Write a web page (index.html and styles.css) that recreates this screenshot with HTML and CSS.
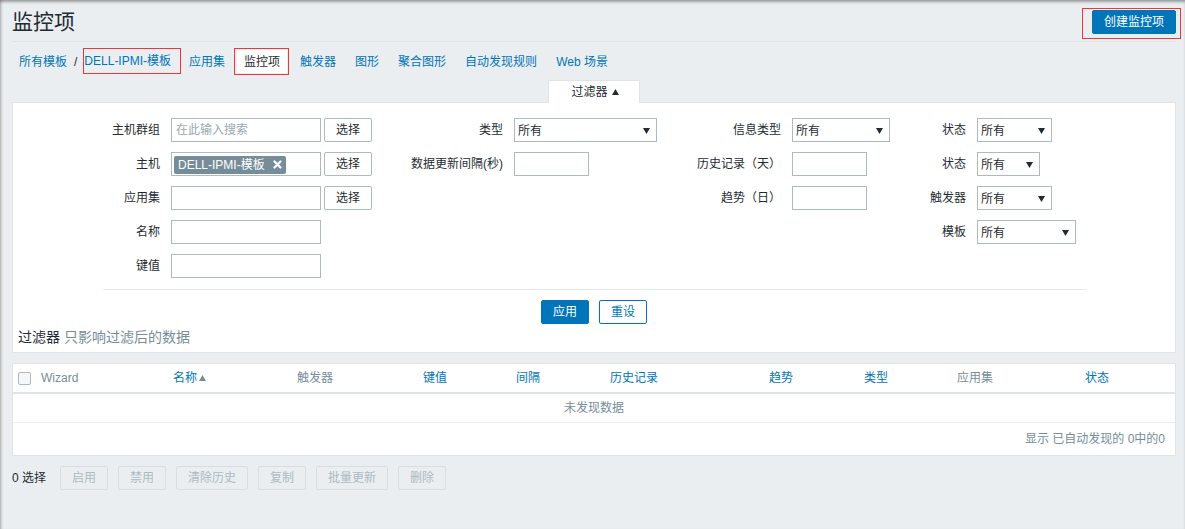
FILE: index.html
```html
<!DOCTYPE html>
<html lang="zh-CN">
<head>
<meta charset="utf-8">
<title>监控项</title>
<link rel="stylesheet" href="styles.css">
</head>
<body>
<div class="page">
  <header class="header">
    <h1 class="title">监控项</h1>
    <div class="create annot annot-create"><button class="btn btn-primary btn-create">创建监控项</button></div>
  </header>

  <nav class="nav">
    <div class="nav-item crumbs">
      <a class="link">所有模板</a><span class="sep">/</span><a class="link host annot annot-host">DELL-IPMI-模板</a>
    </div>
    <a class="nav-item link">应用集</a>
    <span class="nav-item selected annot annot-items">监控项</span>
    <a class="nav-item link">触发器</a>
    <a class="nav-item link">图形</a>
    <a class="nav-item link">聚合图形</a>
    <a class="nav-item link">自动发现规则</a>
    <a class="nav-item link">Web 场景</a>
  </nav>

  <div class="filter-tab">过滤器 <svg class="tri" width="7" height="6" viewBox="0 0 7 6"><polygon points="0,6 3.5,0 7,6" fill="#1f2c33"/></svg></div>

  <section class="panel filter">
    <div class="form-grid">
      <!-- row 1 -->
      <div class="label">主机群组</div>
      <div class="field"><div class="input w150 placeholder">在此输入搜索</div><button class="btn btn-grey">选择</button></div>
      <div class="label">类型</div>
      <div class="field"><div class="select w144"><span>所有</span><svg class="arrow" width="7" height="6" viewBox="0 0 7 6"><polygon points="0,0 7,0 3.5,6" fill="#1f2c33"/></svg></div></div>
      <div class="label">信息类型</div>
      <div class="field"><div class="select w99"><span>所有</span><svg class="arrow" width="7" height="6" viewBox="0 0 7 6"><polygon points="0,0 7,0 3.5,6" fill="#1f2c33"/></svg></div></div>
      <div class="label">状态</div>
      <div class="field"><div class="select w75"><span>所有</span><svg class="arrow" width="7" height="6" viewBox="0 0 7 6"><polygon points="0,0 7,0 3.5,6" fill="#1f2c33"/></svg></div></div>

      <!-- row 2 -->
      <div class="label">主机</div>
      <div class="field"><div class="input w150 multi"><span class="tag">DELL-IPMI-模板<svg class="tag-x" width="9" height="9" viewBox="0 0 9 9"><path d="M1.5 1.5 L7.5 7.5 M7.5 1.5 L1.5 7.5" stroke="#fff" stroke-width="2.2" stroke-linecap="round"/></svg></span></div><button class="btn btn-grey">选择</button></div>
      <div class="label">数据更新间隔(秒)</div>
      <div class="field"><div class="input w75"></div></div>
      <div class="label">历史记录（天）</div>
      <div class="field"><div class="input w75"></div></div>
      <div class="label">状态</div>
      <div class="field"><div class="select w63"><span>所有</span><svg class="arrow" width="7" height="6" viewBox="0 0 7 6"><polygon points="0,0 7,0 3.5,6" fill="#1f2c33"/></svg></div></div>

      <!-- row 3 -->
      <div class="label">应用集</div>
      <div class="field"><div class="input w150"></div><button class="btn btn-grey">选择</button></div>
      <div class="label"></div>
      <div class="field"></div>
      <div class="label">趋势（日）</div>
      <div class="field"><div class="input w75"></div></div>
      <div class="label">触发器</div>
      <div class="field"><div class="select w75"><span>所有</span><svg class="arrow" width="7" height="6" viewBox="0 0 7 6"><polygon points="0,0 7,0 3.5,6" fill="#1f2c33"/></svg></div></div>

      <!-- row 4 -->
      <div class="label">名称</div>
      <div class="field"><div class="input w150"></div></div>
      <div class="label"></div>
      <div class="field"></div>
      <div class="label"></div>
      <div class="field"></div>
      <div class="label">模板</div>
      <div class="field"><div class="select w99"><span>所有</span><svg class="arrow" width="7" height="6" viewBox="0 0 7 6"><polygon points="0,0 7,0 3.5,6" fill="#1f2c33"/></svg></div></div>

      <!-- row 5 -->
      <div class="label">键值</div>
      <div class="field"><div class="input w150"></div></div>
    </div>

    <div class="divider"></div>

    <div class="filter-buttons">
      <button class="btn btn-primary">应用</button>
      <button class="btn btn-alt">重设</button>
    </div>

    <div class="filter-note"><span class="dark">过滤器</span> 只影响过滤后的数据</div>
  </section>

  <section class="panel list">
    <table class="items">
      <colgroup>
        <col class="w-c1"><col class="w-c2"><col class="w-c3"><col class="w-c4"><col class="w-c5"><col class="w-c6"><col class="w-c7"><col class="w-c8"><col class="w-c9"><col class="w-c10"><col>
      </colgroup>
      <thead>
        <tr>
          <th><span class="checkbox"></span></th>
          <th class="muted">Wizard</th>
          <th><a class="link">名称</a><svg class="sort" width="7" height="6" viewBox="0 0 7 6"><polygon points="0,6 3.5,0 7,6" fill="#768d99"/></svg></th>
          <th class="muted">触发器</th>
          <th><a class="link">键值</a></th>
          <th><a class="link">间隔</a></th>
          <th><a class="link">历史记录</a></th>
          <th><a class="link">趋势</a></th>
          <th><a class="link">类型</a></th>
          <th class="muted">应用集</th>
          <th><a class="link">状态</a></th>
        </tr>
      </thead>
      <tbody>
        <tr><td colspan="11" class="empty">未发现数据</td></tr>
      </tbody>
    </table>
    <div class="list-footer">显示 已自动发现的 0中的0</div>
  </section>

  <div class="actions">
    <span class="selected-count">0 选择</span>
    <button class="btn btn-disabled">启用</button>
    <button class="btn btn-disabled">禁用</button>
    <button class="btn btn-disabled">清除历史</button>
    <button class="btn btn-disabled">复制</button>
    <button class="btn btn-disabled">批量更新</button>
    <button class="btn btn-disabled">删除</button>
  </div>
</div>
</body>
</html>
```

FILE: styles.css
```css
* {
  box-sizing: border-box;
}

html,
body {
  margin: 0;
  padding: 0;
}

body {
  background: #ebeef0;
  font-family: "Liberation Sans", Arial, "Noto Sans CJK SC", sans-serif;
  font-size: 12px;
  line-height: 14px;
  color: #1f2c33;
}

.page {
  min-height: 529px;
  padding: 0 9px 0 12px;
  box-shadow: inset 0 3px 3px -1px rgba(0, 0, 0, 0.35), inset 3px 0 3px -2px rgba(0, 0, 0, 0.25);
}

/* annotations (red boxes drawn over the UI) */
.annot {
  position: relative;
}

.annot::after {
  content: "";
  position: absolute;
  border: 1px solid #e8383d;
  pointer-events: none;
}

.annot-create::after {
  left: -10px;
  right: -5px;
  top: -2px;
  bottom: -5px;
}

.annot-host::after {
  left: -1px;
  right: -10px;
  top: -2px;
  bottom: -1px;
}

.annot-items::after {
  left: -3px;
  right: -2px;
  top: -2px;
  bottom: -2px;
}

/* header */
.header {
  display: flex;
  justify-content: space-between;
  align-items: flex-start;
  height: 42px;
  border-bottom: 1px solid #dfe4e7;
}

.title {
  margin: 10px 0 0;
  font-size: 21px;
  line-height: 24px;
  font-weight: normal;
  color: #1f2c33;
}

.create {
  margin-top: 10px;
}

/* buttons */
.btn {
  font-family: inherit;
  font-size: 12px;
  line-height: 14px;
  height: 24px;
  padding: 0 11px;
  border: 1px solid transparent;
  border-radius: 2px;
  cursor: pointer;
  white-space: nowrap;
}

.btn-primary {
  background: #0275b8;
  border-color: #0275b8;
  color: #fff;
}

.btn-create {
  display: block;
  width: 84px;
  padding: 0;
}

.btn-grey {
  background: #fff;
  border-color: #acbbc2;
  color: #1f2c33;
  width: 48px;
  padding: 0;
  margin-left: 3px;
}

.btn-alt {
  background: #fff;
  border-color: #0275b8;
  color: #0275b8;
}

.btn-disabled {
  background: #ebeef0;
  border-color: #d8dee1;
  color: #acbbc2;
  cursor: default;
}

/* navigation */
.nav {
  display: flex;
  align-items: center;
  margin-top: 8px;
  height: 23px;
}

.nav-item {
  display: flex;
  align-items: center;
  height: 23px;
  padding: 0 7px;
  margin-right: 5px;
  white-space: nowrap;
}

.link {
  color: #0275b8;
  text-decoration: none;
}

.crumbs {
  margin-right: 4px;
}

.sep {
  color: #1f2c33;
  margin: 0 7px;
}

.host {
  display: inline-block;
  line-height: 23px;
  height: 23px;
}

.selected {
  background: #fff;
  color: #1f2c33;
  width: 50px;
  margin-right: 6px;
}

/* filter tab */
.filter-tab {
  position: relative;
  z-index: 1;
  width: 92px;
  height: 23px;
  margin: 7px auto -1px;
  background: #fff;
  border: 1px solid #dfe4e7;
  border-bottom: none;
  display: flex;
  align-items: center;
  justify-content: center;
  gap: 4px;
  padding-left: 2px;
}

.tri {
  display: block;
}

/* panels */
.panel {
  background: #fff;
  border: 1px solid #dfe4e7;
}

.filter {
  padding: 15px 0 7px;
}

.form-grid {
  display: grid;
  grid-template-columns: 158px 201px 142px 143px 135px 98px 87px 1fr;
  grid-auto-rows: 24px;
  row-gap: 10px;
}

.label {
  text-align: right;
  padding-right: 11px;
  align-self: center;
  white-space: nowrap;
}

.field {
  display: flex;
  align-items: center;
}

.input {
  height: 24px;
  border: 1px solid #acbbc2;
  background: #fff;
  display: flex;
  align-items: center;
  padding: 0 4px;
}

.placeholder {
  color: #9aa8af;
}

.multi {
  padding: 0 2px;
}

.tag {
  display: inline-flex;
  align-items: center;
  height: 18px;
  background: #768d99;
  color: #fff;
  border-radius: 2px;
  padding: 0 4px 0 4px;
  gap: 8px;
  white-space: nowrap;
  margin-top: 1px;
}

.tag-x {
  display: block;
}

.w150 { width: 150px; }
.w144 { width: 144px; }
.w99 { width: 99px; }
.w75 { width: 75px; }
.w63 { width: 63px; }

.select {
  height: 24px;
  border: 1px solid #acbbc2;
  background: #fff;
  display: flex;
  align-items: center;
  justify-content: space-between;
  padding: 1px 6px 0 3px;
}

.arrow {
  display: block;
}

.divider {
  width: 983px;
  height: 1px;
  margin: 11px auto 0;
  margin-left: 90px;
  background: #e5e9eb;
}

.filter-buttons {
  display: flex;
  justify-content: center;
  gap: 10px;
  margin-top: 10px;
}

.filter-buttons .btn {
  width: 48px;
  padding: 0;
}

.filter-note {
  margin-top: 5px;
  padding-left: 5px;
  font-size: 14px;
  line-height: 16px;
  color: #768d99;
}

.dark {
  color: #1f2c33;
}

/* list */
.list {
  margin-top: 10px;
}

.items {
  width: 100%;
  border-collapse: separate;
  border-spacing: 0;
  table-layout: fixed;
}

.w-c1 { width: 23px; }
.w-c2 { width: 132px; }
.w-c3 { width: 124px; }
.w-c4 { width: 126px; }
.w-c5 { width: 93px; }
.w-c6 { width: 94px; }
.w-c7 { width: 159px; }
.w-c8 { width: 95px; }
.w-c9 { width: 93px; }
.w-c10 { width: 128px; }

.items th {
  text-align: left;
  font-weight: normal;
  padding: 7px 5px;
  border-bottom: 2px solid #dfe4e7;
  white-space: nowrap;
  overflow: hidden;
}

.items th.muted {
  color: #768d99;
}

.checkbox {
  display: block;
  width: 13px;
  height: 13px;
  margin-top: 1px;
  border: 1px solid #acbbc2;
  border-radius: 2px;
  background: #f4f6f7;
}

.sort {
  display: inline-block;
  margin-left: 2px;
  vertical-align: 1px;
}

.items td {
  padding: 7px 5px;
  border-bottom: 1px solid #ebeef0;
}

.empty {
  text-align: center;
  color: #768d99;
}

.list-footer {
  height: 32px;
  line-height: 32px;
  text-align: right;
  padding-right: 10px;
  color: #768d99;
}

/* actions */
.actions {
  display: flex;
  align-items: center;
  gap: 10px;
  margin-top: 10px;
}

.selected-count {
  color: #1f2c33;
  margin-right: 4px;
}
```
